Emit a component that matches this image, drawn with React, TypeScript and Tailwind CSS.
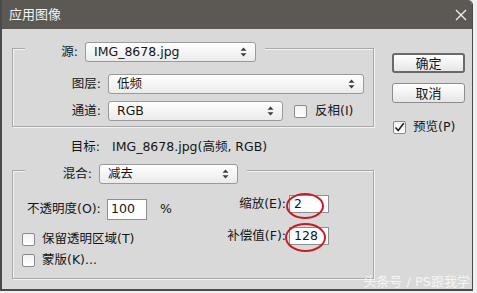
import React from 'react';

const Arrows = () => (
  <svg width="7" height="10" viewBox="0 0 7 10" className="shrink-0">
    <path d="M3.5 0.5 L6.5 3.8 H0.5 Z M3.5 9.5 L6.5 6.2 H0.5 Z" fill="#3c3c3c" />
  </svg>
);

const Select: React.FC<{ value: string; className: string }> = ({ value, className }) => (
  <div
    className={`flex items-center justify-between h-[20px] pl-[8px] pr-[8px] rounded-[3px] border border-[#9a9a9a] bg-linear-to-b from-white to-[#ebebeb] ${className}`}
  >
    <span>{value}</span>
    <Arrows />
  </div>
);

const Checkbox: React.FC<{ checked?: boolean }> = ({ checked }) => (
  <div className="w-[13px] h-[13px] shrink-0 rounded-[2px] border border-[#8a8a8a] bg-linear-to-b from-[#f2f2f2] to-white flex items-center justify-center">
    {checked && (
      <svg width="11" height="11" viewBox="0 0 11 11">
        <path d="M1.5 5.5 L4.2 8.6 L9.8 1.2" fill="none" stroke="#222" strokeWidth="1.6" />
      </svg>
    )}
  </div>
);

const Field: React.FC<{ value: string; className: string; children?: React.ReactNode }> = ({ value, className, children }) => (
  <div className={`relative flex items-center bg-white border border-[#8e8e8e] ${className}`}>
    <span>{value}</span>
    {children}
  </div>
);

export default function App() {
  return (
    <div className="w-[477px] h-[293px] bg-[#f0f0f0] text-[12.5px] text-[#161616] font-['DejaVu_Sans','Noto_Sans_CJK_SC',sans-serif] leading-none">
      <div className="relative w-[473px] h-[291px] flex flex-col bg-[#d9d9d9] border-l-2 border-b-2 border-r border-[#4a4a4a] rounded-tr-[5px] overflow-hidden">
        {/* title bar */}
        <div className="h-[29px] shrink-0 flex items-center justify-between bg-[#5c5854] pl-[7px] pr-[5px]">
          <span className="text-[13px] text-[#f2f2f2]">应用图像</span>
          <svg width="12" height="12" viewBox="0 0 12 12">
            <path d="M1 1 L11 11 M11 1 L1 11" stroke="#f0f0f0" strokeWidth="1.3" />
          </svg>
        </div>

        <div className="flex">
          {/* left column */}
          <div className="ml-[10px] w-[362px] flex flex-col">
            {/* frame 1 */}
            <div className="mt-[19px] flex flex-col pb-[5px] border border-[#a8a8a8] shadow-[inset_1px_1px_0_#f3f3f3,1px_1px_0_#f3f3f3]">
              <div className="-mt-[7px] ml-[12px] self-start flex items-center bg-[#d9d9d9] pr-[9px]">
                <span className="w-[60px] text-right pr-[7px]">源:</span>
                <Select value="IMG_8678.jpg" className="w-[171px]" />
              </div>
              <div className="mt-[12px] flex items-center">
                <span className="w-[95px] text-right pr-[7px]">图层:</span>
                <Select value="低频" className="w-[256px]" />
              </div>
              <div className="mt-[7px] flex items-center">
                <span className="w-[95px] text-right pr-[7px]">通道:</span>
                <Select value="RGB" className="w-[175px]" />
                <div className="ml-[11px]">
                  <Checkbox />
                </div>
                <span className="ml-[8px]">反相(I)</span>
              </div>
            </div>

            {/* target */}
            <div className="mt-[12px] h-[16px] flex items-center">
              <span className="w-[96px] text-right pr-[8px]">目标:</span>
              <span className="ml-[4px]">IMG_8678.jpg(高频, RGB)</span>
            </div>

            {/* frame 2 */}
            <div className="mt-[15px] flex flex-col border border-[#a8a8a8] shadow-[inset_1px_1px_0_#f3f3f3,1px_1px_0_#f3f3f3]">
              <div className="-mt-[7px] ml-[12px] self-start flex items-center bg-[#d9d9d9] pr-[9px]">
                <span className="w-[74px] text-right pr-[7px]">混合:</span>
                <Select value="减去" className="w-[139px]" />
              </div>
              <div className="flex">
                <div className="flex-1 flex flex-col pl-[9px] pb-[10px]">
                  <div className="mt-[15px] ml-[5px] h-[21px] flex items-center">
                    <span className="w-[80px]">不透明度(O):</span>
                    <Field value="100" className="w-[40px] h-[21px] pl-[3px]" />
                    <span className="ml-[13px]">%</span>
                  </div>
                  <div className="mt-[11px] h-[16px] flex items-center gap-[7px]">
                    <Checkbox />
                    <span>保留透明区域(T)</span>
                  </div>
                  <div className="mt-[5px] h-[16px] flex items-center gap-[7px]">
                    <Checkbox />
                    <span>蒙版(K)...</span>
                  </div>
                </div>
                <div className="flex flex-col pr-[44px]">
                  <div className="mt-[11px] flex items-center justify-end">
                    <span className="mr-[3px]">缩放(E):</span>
                    <Field value="2" className="w-[40px] h-[18px] pl-[4px]">
                      <div className="absolute -left-[4px] -top-[3px] w-[38px] h-[26px] rounded-[50%] border-[2.5px] border-[#c81c24]" />
                    </Field>
                  </div>
                  <div className="mt-[14px] flex items-center justify-end">
                    <span className="mr-[3px]">补偿值(F):</span>
                    <Field value="128" className="w-[40px] h-[18px] pl-[4px]">
                      <div className="absolute -left-[5px] -top-[5px] w-[41px] h-[29px] rounded-[50%] border-[2.5px] border-[#c81c24]" />
                    </Field>
                  </div>
                </div>
              </div>
            </div>
          </div>

          {/* right column */}
          <div className="ml-[18px] w-[73px] flex flex-col">
            <button className="mt-[24px] h-[20px] rounded-[3px] border-2 border-[#6a6a6a] bg-linear-to-b from-white to-[#e6e6e6] text-[13px] flex items-center justify-center">
              确定
            </button>
            <button className="mt-[10px] h-[20px] rounded-[3px] border border-[#8e8e8e] bg-linear-to-b from-white to-[#e6e6e6] text-[13px] flex items-center justify-center">
              取消
            </button>
            <div className="mt-[16px] h-[16px] ml-[1px] flex items-center gap-[7px]">
              <Checkbox checked />
              <span>预览(P)</span>
            </div>
          </div>
        </div>

        <span className="absolute right-[2px] bottom-[1px] text-[13px] text-white/75">头条号 / PS跟我学</span>
      </div>
    </div>
  );
}
